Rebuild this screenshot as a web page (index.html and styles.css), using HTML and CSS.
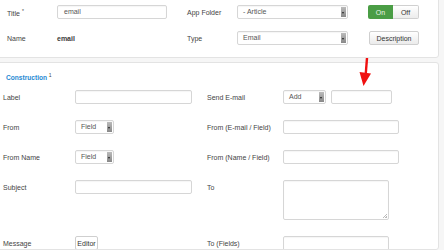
FILE: index.html
```html
<!DOCTYPE html>
<html lang="en">
<head>
    <meta charset="UTF-8">
    <title>Construction</title>
    <link rel="stylesheet" href="styles.css">
</head>
<body>

<div class="panel panel-top">
    <div class="top-grid">
        <span class="label">Title <sup>*</sup></span>
        <div class="input wide-top">email</div>
        <span class="label">App Folder</span>
        <div class="select sel-top"><span>- Article</span><i class="arrow"></i></div>
        <div class="toggle">
            <span class="on">On</span>
            <span class="off">Off</span>
        </div>

        <span class="label">Name</span>
        <span class="value">email</span>
        <span class="label">Type</span>
        <div class="select sel-top"><span>Email</span><i class="arrow"></i></div>
        <div class="btn btn-desc">Description</div>
    </div>
</div>

<div class="panel panel-main">
    <h3 class="legend">Construction <sup>1</sup></h3>

    <div class="form-grid">
        <span class="label">Label</span>
        <div class="input wide"></div>
        <span class="label">Send E-mail</span>
        <div class="pair">
            <div class="select sel-add"><span>Add</span><i class="arrow"></i></div>
            <div class="input small"></div>
        </div>

        <span class="label">From</span>
        <div class="select sel-field"><span>Field</span><i class="arrow"></i></div>
        <span class="label">From (E-mail / Field)</span>
        <div class="input wide2"></div>

        <span class="label">From Name</span>
        <div class="select sel-field"><span>Field</span><i class="arrow"></i></div>
        <span class="label">From (Name / Field)</span>
        <div class="input wide2"></div>

        <span class="label">Subject</span>
        <div class="input wide"></div>
        <span class="label">To</span>
        <div class="textarea"><i class="grip"></i></div>

        <span class="label">Message</span>
        <div class="btn btn-editor">Editor</div>
        <span class="label">To (Fields)</span>
        <div class="textarea"></div>
    </div>
</div>

<!-- стрелка поверх формы -->
<svg class="marker" width="20" height="32" viewBox="0 0 20 32">
    <path d="M11 0 L9.5 19" stroke="#f01010" stroke-width="2.4" fill="none"/>
    <path d="M3.5 14 L15 15.5 L7.5 28 Z" fill="#f01010"/>
</svg>

</body>
</html>
```

FILE: styles.css
```css
body {
    margin: 0;
    padding: 0;
    background-color: #f6f6f6;
    font-family: "Liberation Sans", Arial, sans-serif;
    font-size: 7px;
    color: #444;
    width: 444px;
    height: 250px;
    overflow: hidden;
    position: relative;
}

.panel {
    background-color: white;
    border: 1px solid #e3e3e3;
    border-radius: 3px;
    margin-left: -4px;
    width: 443px;
    box-sizing: border-box;
}

.panel-top {
    margin-top: -4px;
    height: 62px;
    padding: 8px 0 0 10px;
}

.panel-main {
    margin-top: 4px;
    height: 188px;
    padding: 9px 0 0 6px;
    overflow: hidden;
}

.label {
    color: #444;
    white-space: nowrap;
}

sup {
    font-size: 5px;
    vertical-align: 3px;
}

.top-grid {
    display: grid;
    grid-template-columns: 50px 130px 50px 131px auto;
    grid-template-rows: 14px 14px;
    row-gap: 12px;
    align-items: center;
}

.value {
    font-weight: bold;
    color: #3a3a3a;
}

.input,
.select,
.textarea {
    box-sizing: border-box;
    height: 14px;
    border: 1px solid #d6d6d6;
    border-radius: 2px;
    background-color: white;
    box-shadow: inset 0 1px 1px rgba(0, 0, 0, 0.04);
}

.input {
    padding: 2px 0 0 6px;
    color: #555;
}

.wide-top {
    width: 110px;
}

.select {
    display: flex;
    justify-content: space-between;
    align-items: stretch;
    padding-left: 5px;
    color: #555;
}

.select span {
    padding-top: 2px;
}

.select .arrow {
    width: 5px;
    margin: 1px 1px 1px 0;
    background: linear-gradient(#bbb, #888);
    position: relative;
}

.select .arrow::after {
    content: "";
    position: absolute;
    left: 1px;
    top: 5px;
    border-left: 1.5px solid transparent;
    border-right: 1.5px solid transparent;
    border-top: 2px solid #222;
}

.sel-top {
    width: 111px;
}

.toggle {
    display: flex;
    width: 51px;
    height: 14px;
}

.toggle span {
    flex: 1;
    display: flex;
    align-items: center;
    justify-content: center;
}

.toggle .on {
    background-color: #4a9d45;
    color: #e9f4e8;
    border-radius: 2px 0 0 2px;
}

.toggle .off {
    background: linear-gradient(#fff, #ececec);
    border: 1px solid #d0d0d0;
    border-left: none;
    border-radius: 0 2px 2px 0;
    color: #333;
}

.btn {
    box-sizing: border-box;
    height: 14px;
    display: flex;
    align-items: center;
    justify-content: center;
    background: linear-gradient(#fff, #ebebeb);
    border: 1px solid #cfcfcf;
    border-radius: 2px;
    color: #333;
}

.btn-desc {
    width: 50px;
    margin-left: 1px;
}

.legend {
    margin: 0;
    font-size: 6.6px;
    color: #1f8ad3;
    font-weight: bold;
    height: 18px;
    padding-left: 3px;
}

.legend sup {
    color: #444;
    font-weight: normal;
}

.form-grid {
    display: grid;
    grid-template-columns: 72px 132px 76px auto;
    row-gap: 16px;
    align-items: start;
}

.form-grid .label {
    padding-top: 4px;
}

.wide {
    width: 117px;
}

.wide2 {
    width: 116px;
}

.pair {
    display: flex;
    gap: 5px;
}

.sel-add {
    width: 43px;
}

.small {
    width: 61px;
}

.sel-field {
    width: 39px;
}

.textarea {
    width: 106px;
    height: 40px;
    position: relative;
}

.grip {
    position: absolute;
    right: 1px;
    bottom: 1px;
    width: 4px;
    height: 4px;
    background: linear-gradient(135deg, transparent 50%, #bbb 50%, #bbb 60%, transparent 60%, transparent 75%, #bbb 75%);
}

.btn-editor {
    width: 23px;
    background: white;
}

.marker {
    position: absolute;
    left: 356px;
    top: 58px;
}
```
